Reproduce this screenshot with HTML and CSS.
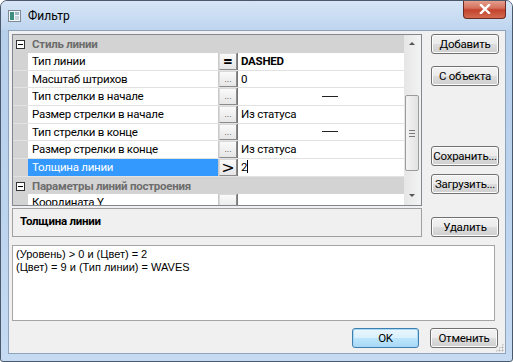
FILE: index.html
```html
<!DOCTYPE html>
<html lang="ru">
<head>
  <meta charset="UTF-8" />
  <title>Фильтр</title>
  <link rel="stylesheet" href="styles.css">
</head>
<body>
  <div class="window">
    <div class="titlebar">
      <svg class="app-icon" width="13" height="12" viewBox="0 0 13 12">
        <rect x="0.5" y="0.5" width="12" height="11" fill="#f4f7f9" stroke="#7d8a95"/>
        <rect x="2" y="2" width="4" height="8" fill="#3f8f80"/>
        <rect x="7" y="2" width="4" height="3" fill="#9fb8c8"/>
        <rect x="7" y="6" width="4" height="4" fill="#c9d6de"/>
      </svg>
      <span class="title">Фильтр</span>
      <div class="close-btn">
        <svg width="12" height="10" viewBox="0 0 12 10">
          <path d="M2 1 L10 9 M10 1 L2 9" stroke="#fff" stroke-width="2.4" stroke-linecap="square"/>
        </svg>
      </div>
    </div>

    <div class="client">
      <div class="top">
        <div class="left-col">
          <div class="grid">
            <div class="rows">
              <div class="row cat">
                <span class="margin"><span class="expander"></span></span>
                <span class="cat-name">Стиль линии</span>
              </div>
              <div class="row">
                <span class="margin"></span>
                <span class="name">Тип линии</span>
                <span class="cell-btn eq">=</span>
                <span class="value bold">DASHED</span>
              </div>
              <div class="row">
                <span class="margin"></span>
                <span class="name">Масштаб штрихов</span>
                <span class="cell-btn">...</span>
                <span class="value">0</span>
              </div>
              <div class="row">
                <span class="margin"></span>
                <span class="name">Тип стрелки в начале</span>
                <span class="cell-btn">...</span>
                <span class="value center"><span class="dash"></span></span>
              </div>
              <div class="row">
                <span class="margin"></span>
                <span class="name">Размер стрелки в начале</span>
                <span class="cell-btn">...</span>
                <span class="value">Из статуса</span>
              </div>
              <div class="row">
                <span class="margin"></span>
                <span class="name">Тип стрелки в конце</span>
                <span class="cell-btn">...</span>
                <span class="value center"><span class="dash"></span></span>
              </div>
              <div class="row">
                <span class="margin"></span>
                <span class="name">Размер стрелки в конце</span>
                <span class="cell-btn">...</span>
                <span class="value">Из статуса</span>
              </div>
              <div class="row selected">
                <span class="margin"></span>
                <span class="name">Толщина линии</span>
                <span class="cell-btn gt">&gt;</span>
                <span class="value">2<span class="caret"></span></span>
              </div>
              <div class="row cat">
                <span class="margin"><span class="expander"></span></span>
                <span class="cat-name">Параметры линий построения</span>
              </div>
              <div class="row">
                <span class="margin"></span>
                <span class="name">Координата Y</span>
                <span class="cell-btn"></span>
                <span class="value"></span>
              </div>
            </div>
            <div class="scrollbar">
              <span class="arrow up"></span>
              <div class="track">
                <div class="thumb"><span class="grip"></span></div>
              </div>
              <span class="arrow down"></span>
            </div>
          </div>
          <div class="desc">Толщина линии</div>
        </div>

        <div class="side-buttons">
          <button class="btn">Добавить</button>
          <button class="btn gap-s">С объекта</button>
          <button class="btn gap-l">Сохранить...</button>
          <button class="btn gap-xs">Загрузить...</button>
          <button class="btn gap-m">Удалить</button>
        </div>
      </div>

      <div class="conditions">
        <div>(Уровень) &gt; 0 и (Цвет) = 2</div>
        <div>(Цвет) = 9 и (Тип линии) = WAVES</div>
      </div>

      <div class="bottom-buttons">
        <button class="btn default">OK</button>
        <button class="btn">Отменить</button>
      </div>
      <span class="grip-corner"></span>
    </div>
  </div>
</body>
</html>
```

FILE: styles.css
```css
html, body {
  margin: 0;
  padding: 0;
  background: #fff;
}
body {
  font-family: Roboto, 'Noto Sans', sans-serif;
  font-size: 11.5px;
  letter-spacing: -0.25px;
  color: #000;
}
.window {
  width: 513px;
  height: 362px;
  box-sizing: border-box;
  border: 1px solid #4a5a6c;
  border-radius: 7px 7px 3px 3px;
  background: linear-gradient(to bottom, #c4d8ef 0px, #b6cfea 30px, #bcd3ee 200px, #c6dbf2 362px);
  display: flex;
  flex-direction: column;
  overflow: hidden;
}

/* title bar */
.titlebar {
  height: 29px;
  display: flex;
  align-items: center;
  position: relative;
  background: linear-gradient(to bottom, #d6e5f6, #bed5ef);
}
.app-icon {
  margin-left: 7px;
  margin-top: 1px;
}
.title {
  margin-left: 7px;
  font-size: 12px;
  letter-spacing: 0;
  color: #000;
  margin-top: 1px;
}
.close-btn {
  position: absolute;
  right: 6px;
  top: -1px;
  width: 43px;
  height: 19px;
  box-sizing: border-box;
  border: 1px solid #6b2a23;
  border-top: none;
  border-radius: 0 0 4px 4px;
  background: linear-gradient(to bottom, #e8a493 0%, #d4715c 45%, #c4432c 55%, #d26a4f 100%);
  display: flex;
  align-items: center;
  justify-content: center;
}

/* client */
.client {
  flex: 1;
  margin: 0 6px 7px 7px;
  border: 1px solid #8ea4bd;
  background: #f0f0f0;
  padding: 3px 6px 0 3px;
  display: flex;
  flex-direction: column;
  position: relative;
}
.top {
  display: flex;
  justify-content: space-between;
}
.left-col {
  width: 410px;
}
.grid {
  height: 172px;
  box-sizing: border-box;
  border: 1px solid #828790;
  background: #fff;
  display: flex;
  overflow: hidden;
}
.rows {
  width: 391px;
  overflow: hidden;
}
.row {
  height: 18px;
  display: flex;
  align-items: stretch;
  box-sizing: border-box;
  border-bottom: 1px solid #e2e2e2;
}
.row:nth-child(3n) {
  height: 17px;
}
.margin {
  width: 15px;
  flex: none;
  background: #d3d3d3;
  position: relative;
}
.row .name {
  width: 191px;
  flex: none;
  padding-left: 4px;
  box-sizing: border-box;
  border-right: 1px solid #c9c9c9;
  line-height: 17px;
  white-space: nowrap;
  overflow: hidden;
}
.cell-btn {
  width: 18px;
  flex: none;
  box-sizing: border-box;
  border: 1px solid #8b8b8b;
  border-top-color: #d9d9d9;
  border-left-color: #d9d9d9;
  background: linear-gradient(to bottom, #fafafa, #e6e6e6);
  font-size: 9px;
  letter-spacing: 0;
  line-height: 15px;
  text-align: center;
  color: #444;
}
.cell-btn.eq {
  font-size: 17px;
  font-weight: 700;
  line-height: 14px;
  color: #000;
}
.cell-btn.gt {
  font-size: 16px;
  line-height: 15px;
  color: #000;
  font-family: 'DejaVu Sans', sans-serif;
}
.value {
  flex: 1;
  padding-left: 3px;
  line-height: 17px;
  white-space: nowrap;
  position: relative;
  border-left: 1px solid #777;
}
.value.bold {
  font-weight: 700;
}
.value.center {
  display: flex;
  align-items: center;
  justify-content: center;
}
.dash {
  width: 16px;
  height: 1px;
  border-top: 1px solid #222;
  margin-left: 14px;
}
.caret {
  display: inline-block;
  width: 1px;
  height: 13px;
  background: #000;
  vertical-align: -2px;
}
.row.selected .name {
  background: #3399ff;
  color: #fff;
}
.row.cat {
  background: #d3d3d3;
  border-bottom: none;
}
.cat-name {
  padding-left: 4px;
  font-weight: 700;
  color: #6d6d6d;
  line-height: 18px;
}
.expander {
  position: absolute;
  left: 3px;
  top: 5px;
  width: 9px;
  height: 9px;
  box-sizing: border-box;
  border: 1px solid #333;
  background: #fff;
}
.expander::after {
  content: "";
  position: absolute;
  left: 1px;
  top: 3px;
  width: 5px;
  height: 1px;
  background: #000;
}

/* scrollbar */
.scrollbar {
  width: 17px;
  flex: none;
  background: linear-gradient(to right, #e6e6e6, #f3f3f3);
  display: flex;
  flex-direction: column;
}
.arrow {
  height: 17px;
  flex: none;
  position: relative;
}
.arrow::after {
  content: "";
  position: absolute;
  left: 5px;
  border-left: 3px solid transparent;
  border-right: 3px solid transparent;
}
.arrow.up::after {
  top: 7px;
  border-bottom: 3px solid #555;
}
.arrow.down::after {
  top: 6px;
  border-top: 3px solid #555;
}
.track {
  flex: 1;
  position: relative;
}
.thumb {
  position: absolute;
  left: 1px;
  top: 43px;
  width: 14px;
  height: 76px;
  box-sizing: border-box;
  border: 1px solid #9b9b9b;
  border-radius: 2px;
  background: linear-gradient(to right, #f4f4f4, #e2e2e2);
  display: flex;
  align-items: center;
  justify-content: center;
}
.grip {
  width: 6px;
  height: 5px;
  border-top: 1px solid #7a7a7a;
  border-bottom: 1px solid #7a7a7a;
  position: relative;
}
.grip::after {
  content: "";
  position: absolute;
  left: 0;
  right: 0;
  top: 2px;
  height: 1px;
  background: #7a7a7a;
}

.desc {
  margin-top: 2px;
  height: 29px;
  box-sizing: border-box;
  border: 1px solid #a0a0a0;
  padding: 5px 0 0 7px;
  font-weight: 700;
}

/* buttons */
.side-buttons {
  display: flex;
  flex-direction: column;
  width: 68px;
}
.btn {
  width: 68px;
  height: 20px;
  padding: 0;
  box-sizing: border-box;
  border: 1px solid #707070;
  border-radius: 3px;
  background: linear-gradient(to bottom, #f2f2f2 0%, #ebebeb 50%, #dddddd 50%, #cfcfcf 100%);
  box-shadow: inset 0 0 0 1px #fcfcfc;
  font-family: Roboto, 'Noto Sans', sans-serif;
  font-size: 11.5px;
  letter-spacing: -0.25px;
  color: #000;
  line-height: 16px;
  white-space: nowrap;
}
.gap-s { margin-top: 12px; }
.gap-l { margin-top: 60px; }
.gap-xs { margin-top: 8px; }
.gap-m { margin-top: 23px; }

.conditions {
  margin-top: 8px;
  margin-right: 4px;
  height: 76px;
  box-sizing: border-box;
  border: 1px solid #a5a5a5;
  background: #fff;
  padding: 2px 3px;
  font-family: 'Liberation Sans', sans-serif;
  font-size: 11px;
  letter-spacing: 0;
  line-height: 13px;
}

.bottom-buttons {
  display: flex;
  justify-content: flex-end;
  gap: 11px;
  margin-top: 7px;
  margin-right: 1px;
}
.btn.default {
  width: 67px;
  border-color: #3c7fb1;
  box-shadow: inset 0 0 0 1px #a9d8f4;
  background: linear-gradient(to bottom, #eaf6fd 0%, #d9f0fc 50%, #bee6fd 50%, #a7d9f5 100%);
}
.grip-corner {
  position: absolute;
  right: 1px;
  bottom: 1px;
  width: 9px;
  height: 9px;
  background: radial-gradient(circle, #b0b0b0 0.8px, transparent 1.2px) 0 0 / 3px 3px;
  clip-path: polygon(100% 0, 100% 100%, 0 100%);
}
```
